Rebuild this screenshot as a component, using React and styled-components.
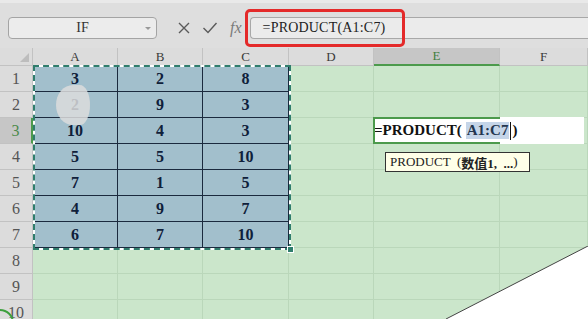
import React from "react";
import styled, { createGlobalStyle } from "styled-components";

const GlobalStyle = createGlobalStyle`
  html, body {
    margin: 0;
    padding: 0;
    background: #dedede;
  }
`;

const Page = styled.div`
  position: relative;
  width: 588px;
  height: 319px;
  overflow: hidden;
  font-family: "Liberation Serif", "Noto Sans CJK SC", serif;
  background: #cbe6cb;
`;

const Toolbar = styled.div`
  display: flex;
  align-items: flex-start;
  height: 48px;
  box-sizing: border-box;
  padding: 14px 0 0 8px;
  background: #dedede;
  border-top: 3px solid #e9e9e9;
`;

const NameBox = styled.div`
  position: relative;
  display: flex;
  align-items: center;
  justify-content: center;
  width: 149px;
  height: 22px;
  box-sizing: border-box;
  border: 1px solid #a4a4a4;
  border-radius: 4px;
  background: #ececec;
  font-size: 14px;
  color: #333;

  &::after {
    content: "";
    position: absolute;
    right: 5px;
    top: 9px;
    border-left: 3px solid transparent;
    border-right: 3px solid transparent;
    border-top: 3px solid #999;
  }
`;

const ToolIcons = styled.div`
  display: flex;
  align-items: center;
  gap: 11px;
  height: 22px;
  margin-left: 20px;
  color: #5a5a5a;
`;

const Fx = styled.span`
  font-style: italic;
  font-size: 16px;
  color: #7a7a7a;
  margin-left: 1px;
`;

const FormulaInput = styled.div`
  display: flex;
  align-items: center;
  flex: 1;
  height: 22px;
  margin-left: 8px;
  box-sizing: border-box;
  padding-left: 12px;
  border: 1px solid #a8a8a8;
  border-right: none;
  border-radius: 4px 0 0 4px;
  background: #ebebeb;
  font-size: 14px;
  color: #222;
  letter-spacing: 0.2px;
`;

const Annotation = styled.div`
  position: absolute;
  left: 245px;
  top: 9px;
  width: 160px;
  height: 38px;
  box-sizing: border-box;
  border: 3px solid #e42a2a;
  border-radius: 5px;
`;

const Sheet = styled.div`
  position: relative;
  display: grid;
  grid-template-columns: 33px 85px 85px 86px 85px 126px 1fr;
  grid-template-rows: 18px repeat(10, 26px);
`;

const ColHead = styled.div`
  display: flex;
  align-items: center;
  justify-content: center;
  box-sizing: border-box;
  background: ${(p) => (p.$active ? "#c6c6c6" : "#dcdcdc")};
  border-right: 1px solid #c2c2c2;
  border-bottom: ${(p) => (p.$active ? "2px solid #4c9a4c" : "1px solid #c2c2c2")};
  color: ${(p) => (p.$active ? "#3f7f3f" : "#3a3a3a")};
  font-size: 13px;
`;

const Corner = styled(ColHead)`
  position: relative;
  &::after {
    content: "";
    position: absolute;
    right: 3px;
    bottom: 3px;
    border-left: 9px solid transparent;
    border-bottom: 9px solid #bdbdbd;
  }
`;

const RowHead = styled.div`
  display: flex;
  align-items: center;
  justify-content: center;
  box-sizing: border-box;
  background: ${(p) => (p.$active ? "#c6c6c6" : "#dcdcdc")};
  border-bottom: 1px solid #c2c2c2;
  border-right: ${(p) => (p.$active ? "2px solid #4c9a4c" : "1px solid #c2c2c2")};
  color: ${(p) => (p.$active ? "#4b8a4b" : "#555")};
  font-size: 16px;
`;

const Cell = styled.div`
  box-sizing: border-box;
  background: #cbe6cb;
  border-right: 1px solid #bad7ba;
  border-bottom: 1px solid #bad7ba;
`;

const DataCell = styled.div`
  display: flex;
  align-items: center;
  justify-content: center;
  box-sizing: border-box;
  background: #a2bfcc;
  border-right: 1px solid #1b2a3e;
  border-bottom: 1px solid #1b2a3e;
  color: #0f203a;
  font-weight: 700;
  font-size: 16px;
`;

const Selection = styled.div`
  position: absolute;
  left: 33px;
  top: 17px;
  width: 258px;
  height: 185px;
  box-sizing: border-box;
  border: 2px solid #fff;
  pointer-events: none;

  &::before {
    content: "";
    position: absolute;
    inset: -2px;
    border: 2px dashed #2f7d6c;
  }

  &::after {
    content: "";
    position: absolute;
    right: -5px;
    bottom: -5px;
    width: 5px;
    height: 5px;
    background: #2f7d6c;
    border: 1px solid #fff;
  }
`;

const ClickMark = styled.div`
  position: absolute;
  left: 56px;
  top: 37px;
  width: 34px;
  height: 40px;
  border-radius: 50% 30% 30% 50% / 50%;
  background: rgba(220, 220, 220, 0.85);
  pointer-events: none;
`;

const Editor = styled.div`
  position: absolute;
  left: 373px;
  top: 69px;
  width: 210px;
  height: 27px;
  display: flex;
  align-items: center;
  background: #fff;
  font-size: 15px;
  font-weight: 700;
  color: #111;
  padding-left: 1px;

  &::before {
    content: "";
    position: absolute;
    left: 0;
    top: 0;
    width: 127px;
    height: 27px;
    box-sizing: border-box;
    border: 2px solid #4c9a4c;
    border-right: none;
  }
`;

const Ref = styled.span`
  background: #c5d5e8;
  color: #23364f;
  padding: 0 1px;
  margin-left: 4px;
`;

const Caret = styled.span`
  display: inline-block;
  width: 1px;
  height: 18px;
  background: #111;
  margin: 0 1px;
`;

const Hint = styled.div`
  position: absolute;
  left: 385px;
  top: 104px;
  width: 145px;
  height: 20px;
  box-sizing: border-box;
  padding: 0 4px;
  display: flex;
  align-items: center;
  background: #ffffe8;
  border: 1px solid #333;
  font-size: 13px;
  color: #222;
  white-space: pre;
`;

const Fold = styled.svg`
  position: absolute;
  right: 0;
  bottom: 0;
`;

const CircleMark = styled.div`
  position: absolute;
  left: -14px;
  bottom: -18px;
  width: 24px;
  height: 24px;
  border-radius: 50%;
  border: 2px solid #3da03d;
`;

const cols = ["A", "B", "C", "D", "E", "F"];
const data = [
  [3, 2, 8],
  [2, 9, 3],
  [10, 4, 3],
  [5, 5, 10],
  [7, 1, 5],
  [4, 9, 7],
  [6, 7, 10],
];

export default function App() {
  const rows = Array.from({ length: 10 }, (_, i) => i + 1);
  return (
    <Page>
      <GlobalStyle />
      <Toolbar>
        <NameBox>IF</NameBox>
        <ToolIcons>
          <svg width="14" height="14" viewBox="0 0 14 14">
            <path d="M2 2 L12 12 M12 2 L2 12" stroke="#5a5a5a" strokeWidth="1.4" fill="none" />
          </svg>
          <svg width="16" height="14" viewBox="0 0 16 14">
            <path d="M1.5 7 L6 11.5 L14.5 2" stroke="#5a5a5a" strokeWidth="1.4" fill="none" />
          </svg>
          <Fx>fx</Fx>
        </ToolIcons>
        <FormulaInput>=PRODUCT(A1:C7)</FormulaInput>
      </Toolbar>
      <Annotation />
      <Sheet>
        <Corner />
        {cols.map((c) => (
          <ColHead key={c} $active={c === "E"}>
            {c}
          </ColHead>
        ))}
        {rows.map((r) => (
          <React.Fragment key={r}>
            <RowHead $active={r === 3}>{r}</RowHead>
            {cols.map((c, ci) =>
              r <= 7 && ci < 3 ? (
                <DataCell key={c}>{data[r - 1][ci]}</DataCell>
              ) : (
                <Cell key={c} />
              )
            )}
          </React.Fragment>
        ))}
        <Selection />
        <ClickMark />
        <Editor>
          =PRODUCT(<Ref>A1:C7</Ref>
          <Caret />)
        </Editor>
        <Hint>PRODUCT  (<b>数值1,  ...</b>)</Hint>
      </Sheet>
      <Fold width="142" height="73" viewBox="0 0 142 73">
        <polygon points="142,0 142,73 0,73" fill="#fff" />
        <line x1="142" y1="0" x2="0" y2="73" stroke="#444" strokeWidth="1" />
      </Fold>
      <CircleMark />
    </Page>
  );
}
